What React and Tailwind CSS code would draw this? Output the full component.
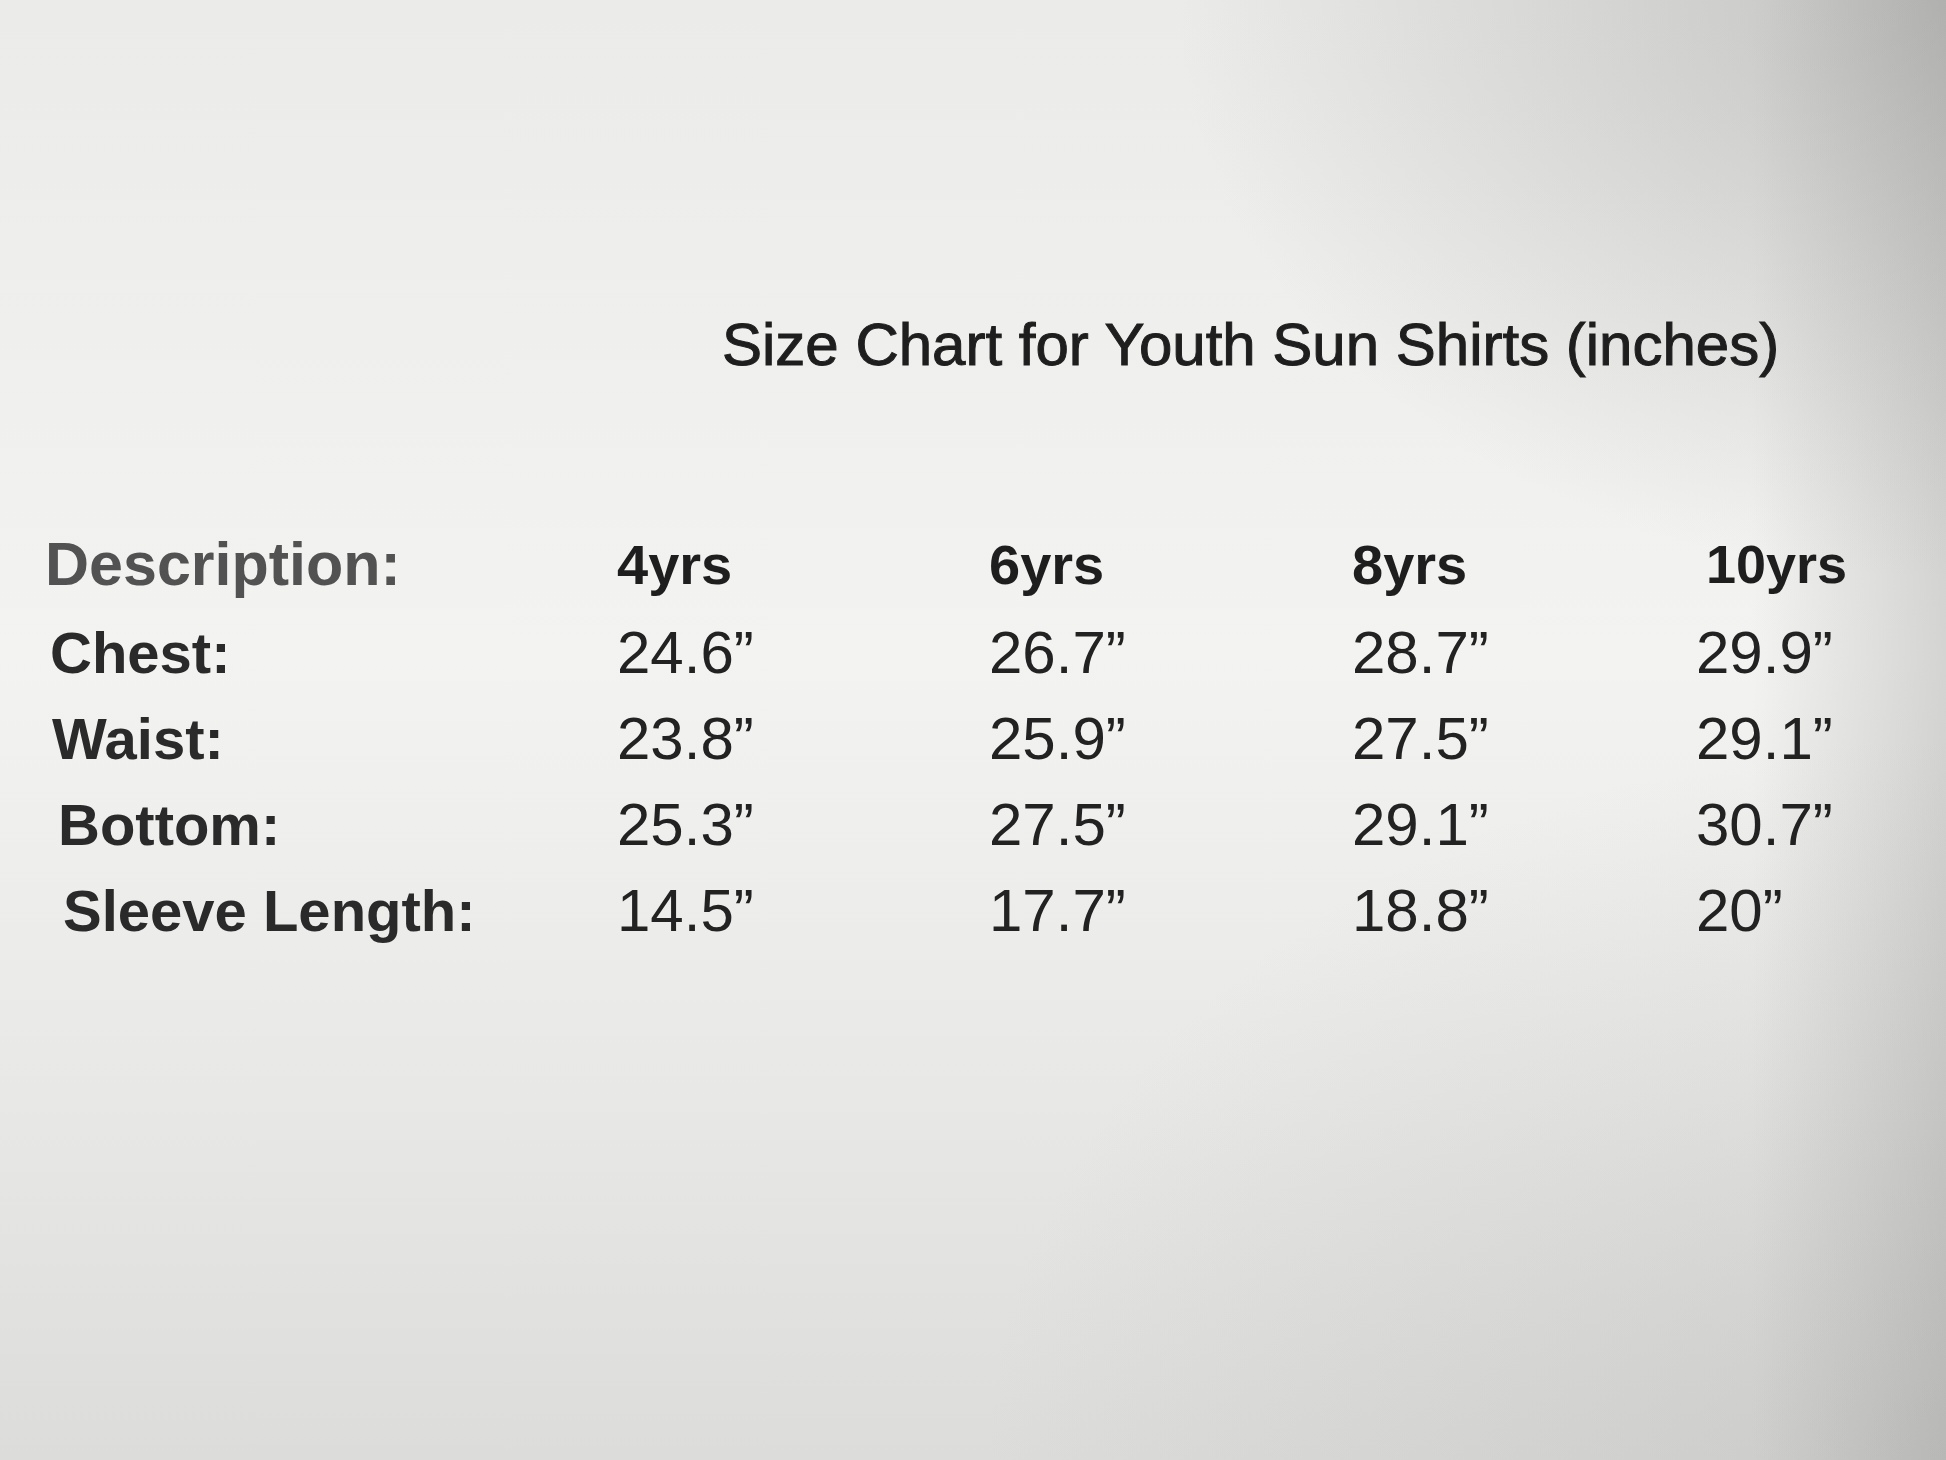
const sizes = ['4yrs', '6yrs', '8yrs', '10yrs'];

const rows = [
  { label: 'Chest:', pad: 'pl-[5px]', values: ['24.6\u201D', '26.7\u201D', '28.7\u201D', '29.9\u201D'] },
  { label: 'Waist:', pad: 'pl-[7px]', values: ['23.8\u201D', '25.9\u201D', '27.5\u201D', '29.1\u201D'] },
  { label: 'Bottom:', pad: 'pl-[13px]', values: ['25.3\u201D', '27.5\u201D', '29.1\u201D', '30.7\u201D'] },
  { label: 'Sleeve Length:', pad: 'pl-[18px]', values: ['14.5\u201D', '17.7\u201D', '18.8\u201D', '20\u201D'] },
];

export default function App() {
  return (
    <div className="h-[1460px] w-full overflow-hidden font-['Liberation_Sans',Arial,sans-serif] text-[#1e1e1e] bg-[radial-gradient(ellipse_at_100%_0%,rgba(120,120,118,0.35),transparent_28%),linear-gradient(to_left,rgba(140,140,138,0.3),transparent_10%),radial-gradient(ellipse_at_100%_100%,rgba(150,150,148,0.25),transparent_35%),linear-gradient(to_bottom,#ebebe9,#f3f3f1_45%,#e8e8e6_75%,#dcdcda)]">
      <div className="pt-[315px] pl-[722px]">
        <h1 className="text-[60px] leading-[60px] font-normal [-webkit-text-stroke:1px_#1e1e1e]">
          Size Chart for Youth Sun Shirts (inches)
        </h1>
      </div>

      <div className="mt-[144px] pl-[45px]">
        <div className="grid grid-cols-[572px_372px_363px_344px_auto] h-[91px] leading-[91px] font-bold">
          <div className="text-[61px] text-[#525252]">Description:</div>
          {sizes.map((s, i) => (
            <div key={s} className={i === 3 ? 'pl-[10px] text-[54px]' : 'text-[56px]'}>{s}</div>
          ))}
        </div>

        {rows.map((row) => (
          <div key={row.label} className="grid grid-cols-[572px_372px_363px_344px_auto] h-[86px] leading-[86px]">
            <div className={`${row.pad} text-[58px] font-bold text-[#2a2a2a]`}>{row.label}</div>
            {row.values.map((v, i) => (
              <div key={i} className="text-[60px] text-[#222222]">{v}</div>
            ))}
          </div>
        ))}
      </div>
    </div>
  );
}
